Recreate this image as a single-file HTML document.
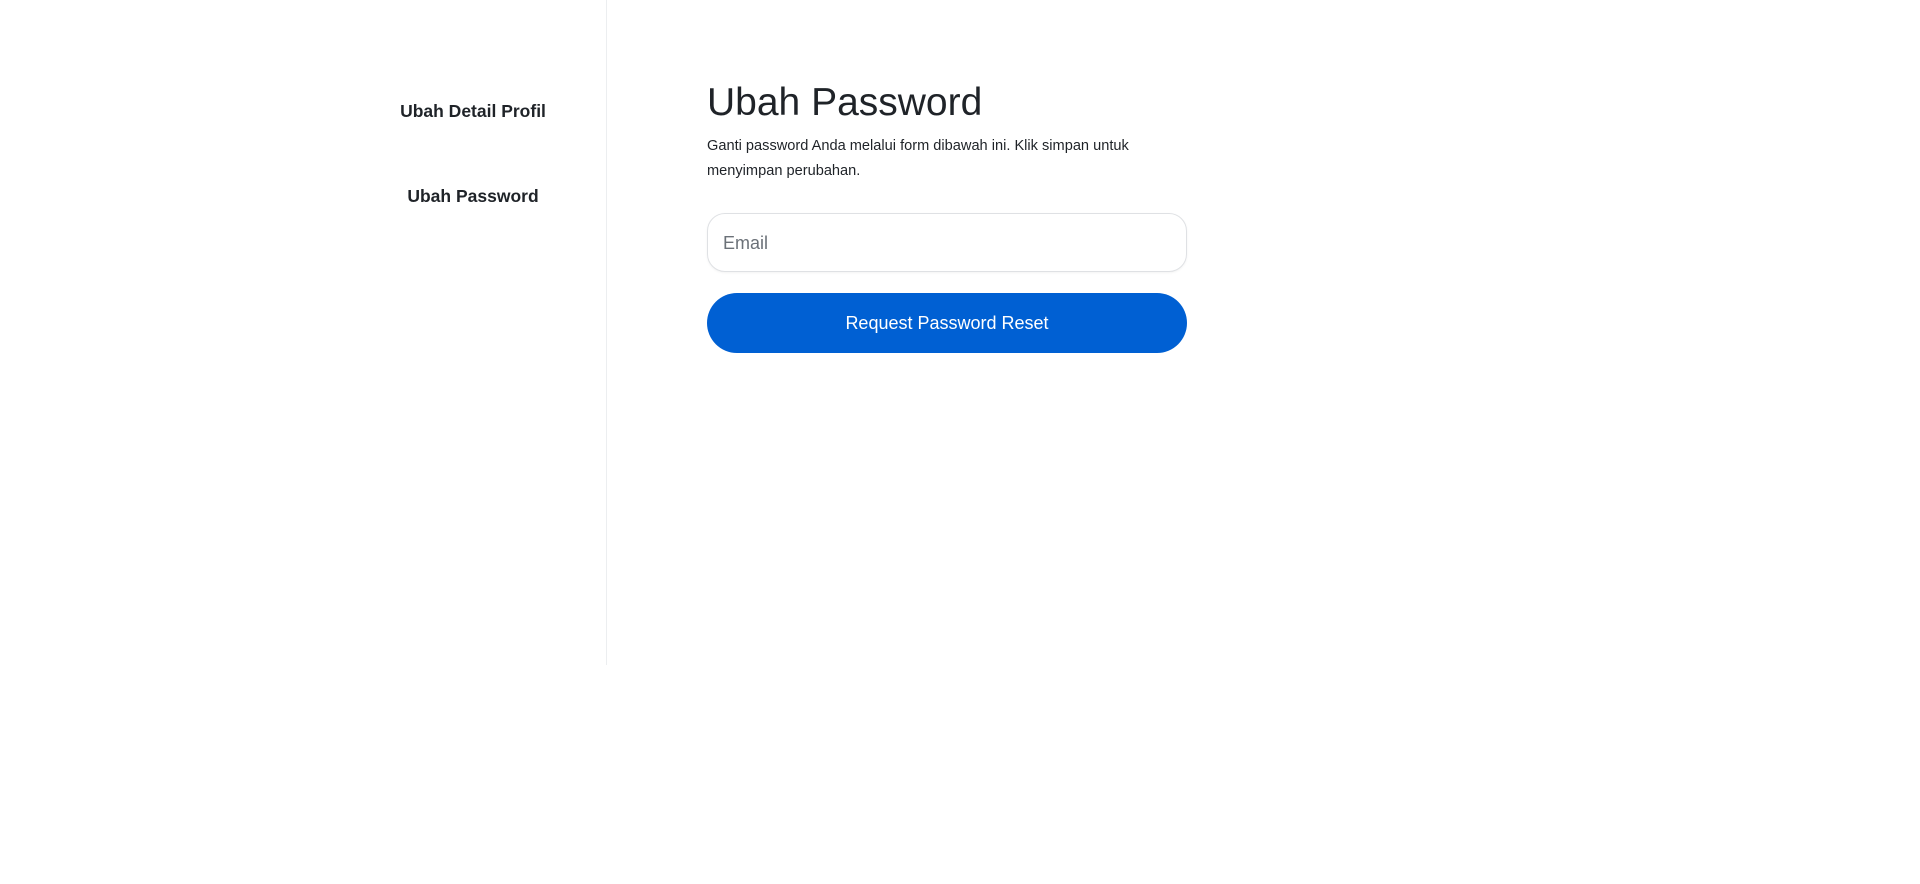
<!DOCTYPE html>
<html><head><style>
body{margin:0;width:1920px;height:884px;background:#fff;font-family:"Liberation Sans",sans-serif;color:#1f2328;position:relative;overflow:hidden}
.div{position:absolute;left:606px;top:0;width:1px;height:665px;background:#eceef0}
.nav{position:absolute;width:300px;left:323px;text-align:center;font-size:17.5px;font-weight:bold;color:#1f2328}
h1{position:absolute;left:707px;top:81px;margin:0;font-size:39px;font-weight:normal;color:#1f2328}
p{position:absolute;left:707px;top:134px;margin:0;width:490px;font-size:14.6px;line-height:25px;color:#1f2328}
.in{position:absolute;left:707px;top:213px;width:478px;height:57px;border:1px solid #dfe1e4;border-radius:18px;box-shadow:0 1px 2px rgba(0,0,0,.05)}
.in span{position:absolute;left:15px;top:19px;font-size:18px;color:#6b7178}
.btn{position:absolute;left:707px;top:293px;width:480px;height:60px;border-radius:30px;background:#0060d3;color:#fff;font-size:18px;text-align:center;line-height:60px}
</style></head><body>
<div class="div"></div>
<div class="nav" style="top:101px">Ubah Detail Profil</div>
<div class="nav" style="top:186px">Ubah Password</div>
<h1>Ubah Password</h1>
<p>Ganti password Anda melalui form dibawah ini. Klik simpan untuk menyimpan perubahan.</p>
<div class="in"><span>Email</span></div>
<div class="btn">Request Password Reset</div>
</body></html>
